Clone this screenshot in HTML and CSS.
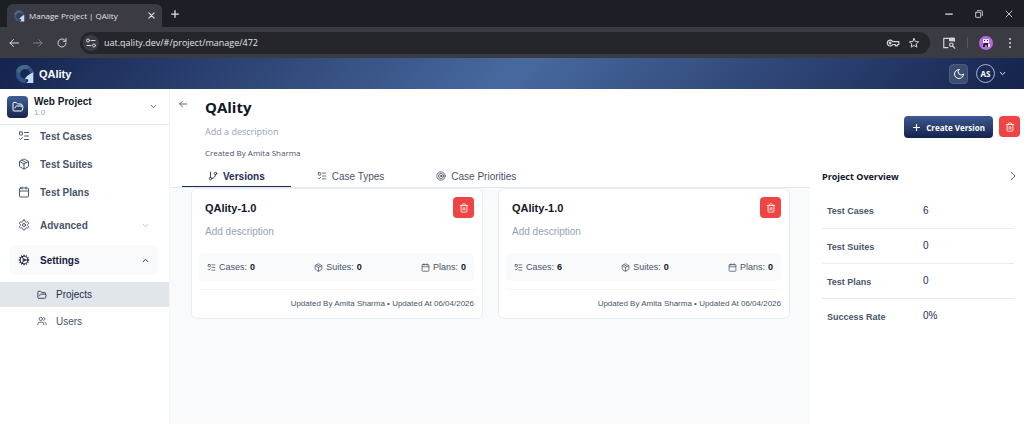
FILE: index.html
```html
<!DOCTYPE html>
<html lang="en">
<head>
  <meta charset="UTF-8" />
  <meta name="viewport" content="width=device-width, initial-scale=1.0" />
  <title>Manage Project | QAlity</title>
  <link rel="stylesheet" href="styles.css">
</head>
<body>

  <!-- Icon set -->
  <svg class="sprite" aria-hidden="true">
    <symbol id="logo" viewBox="0 0 20 20">
      <path d="M10 1a9 9 0 1 0 1 18l1-4.500a5 5 0 1 1 3.500-5l3.500-1.500A9 9 0 0 0 10 1z" fill="#2f5588" stroke="none" />
      <path d="M1.500 7a9 9 0 0 1 13.500-4.500l-2.500 3A5 5 0 0 0 5.500 9z" fill="#46688f" stroke="none" />
      <path d="M18.800 8v11H11.500c2-1 2.500-2 2.200-3.500-1-.500-2.200-.700-3.200-.300 1.200-3.700 4.500-4.200 8.300-7.200z" fill="#c5dcf8" stroke="none" />
    </symbol>
    <symbol id="list" viewBox="0 0 24 24">
      <rect x="3" y="4" width="6" height="6" rx="1" /><path d="m3 17 2 2 4-4M13 5h8M13 12h8M13 19h8" />
    </symbol>
    <symbol id="package" viewBox="0 0 24 24">
      <path d="M11 21.700a2 2 0 0 0 2 0l7-4A2 2 0 0 0 21 16V8a2 2 0 0 0-1-1.700l-7-4a2 2 0 0 0-2 0l-7 4A2 2 0 0 0 3 8v8a2 2 0 0 0 1 1.700z" /><path d="M12 22V12M3.300 7 12 12l8.700-5M7.500 4.300l9 5.100" />
    </symbol>
    <symbol id="calendar" viewBox="0 0 24 24">
      <rect x="3" y="4" width="18" height="18" rx="2" /><path d="M8 2v4M16 2v4M3 10h18" />
    </symbol>
    <symbol id="settings" viewBox="0 0 24 24">
      <path d="M12.220 2h-.44a2 2 0 0 0-2 2v.18a2 2 0 0 1-1 1.730l-.43.25a2 2 0 0 1-2 0l-.15-.08a2 2 0 0 0-2.730.73l-.22.38a2 2 0 0 0 .73 2.730l.15.1a2 2 0 0 1 1 1.720v.51a2 2 0 0 1-1 1.740l-.15.09a2 2 0 0 0-.73 2.730l.22.38a2 2 0 0 0 2.730.73l.15-.08a2 2 0 0 1 2 0l.43.25a2 2 0 0 1 1 1.730V20a2 2 0 0 0 2 2h.44a2 2 0 0 0 2-2v-.18a2 2 0 0 1 1-1.730l.43-.25a2 2 0 0 1 2 0l.15.08a2 2 0 0 0 2.730-.73l.22-.39a2 2 0 0 0-.73-2.730l-.15-.08a2 2 0 0 1-1-1.740v-.5a2 2 0 0 1 1-1.740l.15-.09a2 2 0 0 0 .73-2.730l-.22-.38a2 2 0 0 0-2.730-.73l-.15.08a2 2 0 0 1-2 0l-.43-.25a2 2 0 0 1-1-1.730V4a2 2 0 0 0-2-2z" /><circle cx="12" cy="12" r="3" />
    </symbol>
    <symbol id="cog" viewBox="0 0 24 24">
      <circle cx="12" cy="12" r="8" /><circle cx="12" cy="12" r="2" /><path d="M12 2v2M12 22v-2M17 20.660l-1-1.730M11 10.270 7 3.340M20.660 17l-1.730-1M3.340 7l1.730 1M14 12h8M2 12h2M20.660 7l-1.730 1M3.340 17l1.730-1M17 3.340l-1 1.730M11 13.730l-4 6.930" />
    </symbol>
    <symbol id="folder" viewBox="0 0 24 24">
      <path d="m6 14 1.500-2.900A2 2 0 0 1 9.240 10H20a2 2 0 0 1 1.940 2.500l-1.540 6a2 2 0 0 1-1.950 1.500H4a2 2 0 0 1-2-2V5a2 2 0 0 1 2-2h3.900a2 2 0 0 1 1.690.9l.81 1.200a2 2 0 0 0 1.670.9H18a2 2 0 0 1 2 2v2" />
    </symbol>
    <symbol id="users" viewBox="0 0 24 24">
      <path d="M16 21v-2a4 4 0 0 0-4-4H6a4 4 0 0 0-4 4v2M22 21v-2a4 4 0 0 0-3-3.870M16 3.130a4 4 0 0 1 0 7.750" /><circle cx="9" cy="7" r="4" />
    </symbol>
    <symbol id="branch" viewBox="0 0 24 24">
      <path d="M6 3v12" /><circle cx="18" cy="6" r="3" /><circle cx="6" cy="18" r="3" /><path d="M18 9a9 9 0 0 1-9 9" />
    </symbol>
    <symbol id="target" viewBox="0 0 24 24">
      <circle cx="12" cy="12" r="10" /><circle cx="12" cy="12" r="6" /><circle cx="12" cy="12" r="2" />
    </symbol>
    <symbol id="trash" viewBox="0 0 24 24">
      <path d="M3 6h18M19 6v14a2 2 0 0 1-2 2H7a2 2 0 0 1-2-2V6M8 6V4a2 2 0 0 1 2-2h4a2 2 0 0 1 2 2v2M10 11v6M14 11v6" />
    </symbol>
    <symbol id="down" viewBox="0 0 24 24"><path d="m4 8 8 8 8-8" /></symbol>
    <symbol id="up" viewBox="0 0 24 24"><path d="m20 16-8-8-8 8" /></symbol>
    <symbol id="right" viewBox="0 0 24 24"><path d="m8 3 9 9-9 9" /></symbol>
    <symbol id="arrow-left" viewBox="0 0 24 24"><path d="m11 5-7 7 7 7M4 12h17" /></symbol>
    <symbol id="arrow-right" viewBox="0 0 24 24"><path d="m13 5 7 7-7 7M20 12H3" /></symbol>
    <symbol id="reload" viewBox="0 0 24 24"><path d="M20 12a8 8 0 1 1-2.500-5.800L20 8.500M20 3v5.500h-5.500" /></symbol>
    <symbol id="tune" viewBox="0 0 24 24"><circle cx="6" cy="7" r="3" /><path d="M12 7h8M4 17h8" /><circle cx="18" cy="17" r="3" /></symbol>
    <symbol id="key" viewBox="0 0 24 24"><path d="M11.500 9.500H22v5h-2.500V17H16v-2.500h-4.500a5 5 0 1 1 0-5z" /><circle cx="7" cy="12" r="1.500" /></symbol>
    <symbol id="star" viewBox="0 0 24 24"><path d="m12 3 2.700 6 6.500.6-4.900 4.300 1.500 6.400L12 16.900l-5.800 3.400 1.500-6.400-4.900-4.300 6.500-.6z" /></symbol>
    <symbol id="search-page" viewBox="0 0 24 24"><path d="M10 20H3V4h18v5" /><path d="M13 4h8v4h-8z" fill="currentColor" /><circle cx="16" cy="15" r="3" /><path d="m18 17 4 4" /></symbol>
    <symbol id="moon" viewBox="0 0 24 24"><path d="M12 3a6 6 0 0 0 9 9 9 9 0 1 1-9-9z" /></symbol>
    <symbol id="plus" viewBox="0 0 24 24"><path d="M12 4v16M4 12h16" /></symbol>
    <symbol id="close" viewBox="0 0 24 24"><path d="m5 5 14 14M19 5 5 19" /></symbol>
    <symbol id="minus" viewBox="0 0 24 24"><path d="M4 12h16" /></symbol>
    <symbol id="restore" viewBox="0 0 24 24"><rect x="4" y="8" width="12" height="12" rx="1" /><path d="M8 4h10a2 2 0 0 1 2 2v10" /></symbol>
    <symbol id="dots" viewBox="0 0 24 24"><path d="M12 4v.1M12 12v.1M12 20v.1" stroke-width="4" /></symbol>
  </svg>

  <!-- Browser window -->
  <div class="tab-strip">
    <div class="browser-tab">
      <svg class="icon"><use href="#logo" /></svg>
      <span class="tab-title">Manage Project | QAlity</span>
      <button type="button" class="plain" aria-label="Close tab"><svg class="icon tiny bold"><use href="#close" /></svg></button>
    </div>
    <button type="button" class="plain new-tab" aria-label="New tab"><svg class="icon small bold"><use href="#plus" /></svg></button>
    <div class="window-buttons">
      <button type="button" class="plain" aria-label="Minimize"><svg class="icon small bold"><use href="#minus" /></svg></button>
      <button type="button" class="plain" aria-label="Restore"><svg class="icon small"><use href="#restore" /></svg></button>
      <button type="button" class="plain" aria-label="Close window"><svg class="icon small"><use href="#close" /></svg></button>
    </div>
  </div>

  <div class="toolbar">
    <button type="button" class="plain" aria-label="Back"><svg class="icon"><use href="#arrow-left" /></svg></button>
    <button type="button" class="plain dim" aria-label="Forward"><svg class="icon"><use href="#arrow-right" /></svg></button>
    <button type="button" class="plain" aria-label="Reload"><svg class="icon"><use href="#reload" /></svg></button>
    <div class="address">
      <button type="button" class="plain site-info" aria-label="Site information"><svg class="icon"><use href="#tune" /></svg></button>
      <input type="text" class="url" aria-label="Address" value="uat.qality.dev/#/project/manage/472" />
      <button type="button" class="plain" aria-label="Passwords"><svg class="icon wide"><use href="#key" /></svg></button>
      <button type="button" class="plain" aria-label="Bookmark"><svg class="icon"><use href="#star" /></svg></button>
    </div>
    <div class="toolbar-end">
      <button type="button" class="plain" aria-label="Search tabs"><svg class="icon wide"><use href="#search-page" /></svg></button>
      <span class="divider"></span>
      <button type="button" class="plain" aria-label="Profile">
        <svg class="profile" viewBox="0 0 14 14">
          <circle cx="7" cy="7" r="7" fill="#b46be0" />
          <path d="M4 3h6v4H4z" fill="#ece5f2" /><path d="M5 4h1v1H5zM8 4h1v1H8zM5 7h4v4H8V9H6v2H4V9z" fill="#251c35" /><path d="M9 8h2v3H9z" fill="#eee" />
        </svg>
      </button>
      <button type="button" class="plain" aria-label="Menu"><svg class="icon"><use href="#dots" /></svg></button>
    </div>
  </div>

  <!-- App header -->
  <header class="app-header">
    <a href="#" class="brand"><svg class="brand-logo"><use href="#logo" /></svg>QAlity</a>
    <div class="account">
      <button type="button" class="theme" aria-label="Dark mode"><svg class="icon"><use href="#moon" /></svg></button>
      <button type="button" class="plain user"><span class="avatar">AS</span><svg class="icon mini bold"><use href="#down" /></svg></button>
    </div>
  </header>

  <div class="layout">
    <aside class="sidebar">
      <button type="button" class="project-picker">
        <span class="project-icon"><svg class="icon"><use href="#folder" /></svg></span>
        <span class="project-name">Web Project<small>1.0</small></span>
        <svg class="icon mini bold"><use href="#down" /></svg>
      </button>
      <nav class="menu">
        <a href="#"><svg class="icon"><use href="#list" /></svg>Test Cases</a>
        <a href="#"><svg class="icon"><use href="#package" /></svg>Test Suites</a>
        <a href="#"><svg class="icon"><use href="#calendar" /></svg>Test Plans</a>
        <button type="button" class="group"><svg class="icon"><use href="#settings" /></svg>Advanced<svg class="icon mini end faded"><use href="#down" /></svg></button>
        <button type="button" class="group open"><svg class="icon"><use href="#cog" /></svg>Settings<svg class="icon mini end bold"><use href="#up" /></svg></button>
        <a href="#" class="sub active"><svg class="icon small"><use href="#folder" /></svg>Projects</a>
        <a href="#" class="sub"><svg class="icon small"><use href="#users" /></svg>Users</a>
      </nav>
    </aside>

    <main class="content">
      <section class="project-head">
        <button type="button" class="plain back" aria-label="Go back"><svg class="icon small"><use href="#arrow-left" /></svg></button>
        <div class="project-info">
          <h1>QAlity</h1>
          <p class="description">Add a description</p>
          <p class="created">Created By Amita Sharma</p>
        </div>
        <div class="actions">
          <button type="button" class="create"><svg class="icon tiny bold"><use href="#plus" /></svg>Create Version</button>
          <button type="button" class="delete" aria-label="Delete project"><svg class="icon small"><use href="#trash" /></svg></button>
        </div>
      </section>

      <div class="columns">
        <section class="versions">
          <nav class="tabs">
            <a href="#" class="current"><svg class="icon small"><use href="#branch" /></svg>Versions</a>
            <a href="#"><svg class="icon small"><use href="#list" /></svg>Case Types</a>
            <a href="#"><svg class="icon small"><use href="#target" /></svg>Case Priorities</a>
          </nav>
          <div class="cards">
            <article class="card">
              <div class="card-head">
                <h2>QAlity-1.0</h2>
                <button type="button" class="delete" aria-label="Delete version"><svg class="icon small"><use href="#trash" /></svg></button>
              </div>
              <p class="card-text">Add description</p>
              <div class="stats">
                <span><svg class="icon tiny"><use href="#list" /></svg>Cases: <b>0</b></span>
                <span><svg class="icon tiny"><use href="#package" /></svg>Suites: <b>0</b></span>
                <span><svg class="icon tiny"><use href="#calendar" /></svg>Plans: <b>0</b></span>
              </div>
              <p class="updated">Updated By Amita Sharma • Updated At 06/04/2026</p>
            </article>
            <article class="card">
              <div class="card-head">
                <h2>QAlity-1.0</h2>
                <button type="button" class="delete" aria-label="Delete version"><svg class="icon small"><use href="#trash" /></svg></button>
              </div>
              <p class="card-text">Add description</p>
              <div class="stats">
                <span><svg class="icon tiny"><use href="#list" /></svg>Cases: <b>6</b></span>
                <span><svg class="icon tiny"><use href="#package" /></svg>Suites: <b>0</b></span>
                <span><svg class="icon tiny"><use href="#calendar" /></svg>Plans: <b>0</b></span>
              </div>
              <p class="updated">Updated By Amita Sharma • Updated At 06/04/2026</p>
            </article>
          </div>
        </section>

        <aside class="overview">
          <div class="overview-head">
            <h2>Project Overview</h2>
            <button type="button" class="plain" aria-label="Collapse overview"><svg class="icon small"><use href="#right" /></svg></button>
          </div>
          <table>
            <tr><th scope="row">Test Cases</th><td>6</td></tr>
            <tr><th scope="row">Test Suites</th><td>0</td></tr>
            <tr><th scope="row">Test Plans</th><td>0</td></tr>
            <tr><th scope="row">Success Rate</th><td>0%</td></tr>
          </table>
        </aside>
      </div>
    </main>
  </div>

</body>
</html>
```

FILE: styles.css
```css
* {
  box-sizing: border-box;
}

body {
  margin: 0;
  min-height: 100vh;
  display: flex;
  flex-direction: column;
  font-family: "Liberation Sans", Arial, sans-serif;
  font-size: 10px;
  color: #475569;
  background: #f8fafc;
}

h1, h2, p {
  margin: 0;
}

a {
  color: inherit;
  text-decoration: none;
}

button {
  font: inherit;
  color: inherit;
  border: none;
  padding: 0;
  cursor: pointer;
  display: flex;
  align-items: center;
}

.sprite {
  display: none;
}

.icon {
  width: 12px;
  height: 12px;
  flex: none;
  fill: none;
  stroke: currentColor;
  stroke-width: 2;
  stroke-linecap: round;
  stroke-linejoin: round;
}

.icon.small {
  width: 10px;
  height: 10px;
}

.icon.tiny {
  width: 9px;
  height: 9px;
}

.icon.mini {
  width: 7px;
  height: 7px;
}

.icon.wide {
  width: 14px;
  height: 14px;
}

.icon.bold {
  stroke-width: 3;
}

.plain {
  background: none;
}

/* Browser window */
.tab-strip {
  display: flex;
  align-items: center;
  height: 27px;
  padding-left: 7px;
  background: #1c2026;
  color: #e3e3e6;
  font-family: "Open Sans", sans-serif;
}

.browser-tab {
  display: flex;
  align-items: center;
  align-self: flex-end;
  gap: 4px;
  width: 155px;
  height: 23px;
  padding: 0 6px;
  font-size: 8px;
  background: #3b3c43;
  border-radius: 6px 6px 0 0;
}

.tab-title {
  flex: 1;
}

.new-tab {
  margin-left: 8px;
}

.window-buttons {
  display: flex;
  gap: 20px;
  margin-left: auto;
  padding-right: 10px;
}

.toolbar {
  display: flex;
  align-items: center;
  gap: 12px;
  height: 31px;
  padding: 0 8px;
  background: #3b3c43;
  color: #d5d6da;
}

.dim {
  color: #7d7e84;
}

.address {
  flex: 1;
  display: flex;
  align-items: center;
  gap: 8px;
  height: 22px;
  padding: 0 10px 0 3px;
  background: #24262c;
  border-radius: 11px;
}

.site-info {
  justify-content: center;
  width: 16px;
  height: 16px;
  margin-right: -3px;
  background: #3b3c43;
  border-radius: 50%;
}

.url {
  flex: 1;
  min-width: 0;
  padding: 0;
  font-family: "Open Sans", sans-serif;
  font-size: 9px;
  color: #e3e3e6;
  background: none;
  border: none;
}

.toolbar-end {
  display: flex;
  align-items: center;
  gap: 11px;
}

.divider {
  width: 1px;
  height: 11px;
  background: #56575e;
}

.profile {
  width: 14px;
  height: 14px;
}

/* App header */
.app-header {
  display: flex;
  align-items: center;
  justify-content: space-between;
  height: 31px;
  padding: 0 18px 0 14px;
  color: #fff;
  background: linear-gradient(135deg, #15234d, #48699f 50%, #15234d);
}

.brand {
  display: flex;
  align-items: center;
  gap: 4px;
  font-size: 11px;
  font-weight: bold;
}

.brand-logo {
  width: 21px;
  height: 20px;
}

.account {
  display: flex;
  align-items: center;
  gap: 8px;
}

.theme {
  justify-content: center;
  width: 19px;
  height: 20px;
  color: #fff;
  background: #3d4d71;
  border: 1px solid #4c5d80;
  border-radius: 4px;
}

.user {
  gap: 4px;
}

.avatar {
  display: flex;
  align-items: center;
  justify-content: center;
  width: 19px;
  height: 19px;
  font-family: "Noto Sans", sans-serif;
  font-size: 8px;
  font-weight: bold;
  border: 1px solid #a9b5cf;
  border-radius: 50%;
}

.layout {
  flex: 1;
  display: flex;
}

/* Sidebar */
.sidebar {
  flex: none;
  width: 170px;
  background: #fff;
  border-right: 1px solid #f1f5f9;
}

.project-picker {
  gap: 6px;
  width: 100%;
  height: 36px;
  padding: 0 12px 0 7px;
  text-align: left;
  background: #fff;
  border-bottom: 1px solid #e2e8f0;
}

.project-icon {
  display: flex;
  align-items: center;
  justify-content: center;
  width: 21px;
  height: 22px;
  color: #fff;
  background: linear-gradient(#3f5f96, #16244d);
  border-radius: 4px;
}

.project-name {
  flex: 1;
  font-weight: bold;
  line-height: 12px;
  color: #0f172a;
}

.project-name small {
  display: block;
  font-size: 8px;
  font-weight: normal;
  line-height: 10px;
  color: #94a3b8;
}

.menu a,
.menu .group {
  display: flex;
  align-items: center;
  gap: 10px;
  height: 28px;
  padding: 0 18px;
  font-weight: bold;
}

.menu a:first-child {
  height: 25px;
  padding-bottom: 3px;
}

.menu .group {
  width: calc(100% - 20px);
  height: 30px;
  margin: 4px 10px 0 9px;
  padding: 0 9px;
  background: none;
  border-radius: 5px;
}

.menu .open {
  margin-top: 5px;
  margin-bottom: 7px;
  color: #14213d;
  background: #f8fafc;
}

.end {
  margin-left: auto;
}

.faded {
  color: #94a3b8;
}

.menu .sub {
  height: 28px;
  gap: 9px;
  padding-left: 37px;
  font-weight: normal;
}

.menu .active {
  height: 25px;
  color: #1e2b4f;
  background: #e1e6eb;
}

/* Project header */
.content {
  flex: 1;
  min-width: 0;
  display: flex;
  flex-direction: column;
}

.project-head {
  display: flex;
  align-items: center;
  height: 76px;
  padding: 0 4px 0 8px;
  background: #fff;
  font-family: "Open Sans", sans-serif;
}

.back {
  align-self: flex-start;
  margin-top: 10px;
}

.project-info {
  flex: 1;
  padding: 2px 0 0 17px;
}

h1 {
  font-size: 15px;
  line-height: 20px;
  color: #0f172a;
}

.description {
  margin: 8px 0;
  font-size: 9px;
  line-height: 14px;
  color: #94a3b8;
}

.created {
  font-size: 8px;
  line-height: 12px;
}

.actions {
  display: flex;
  gap: 6px;
}

.create {
  gap: 5px;
  height: 22px;
  padding: 0 8px;
  font-size: 8px;
  font-weight: bold;
  color: #fff;
  background: linear-gradient(#3c5a92, #15224b);
  border-radius: 4px;
}

.delete {
  justify-content: center;
  width: 21px;
  height: 21px;
  color: #fff;
  background: #ef4444;
  border-radius: 4px;
}

.columns {
  flex: 1;
  display: flex;
}

/* Versions */
.versions {
  flex: 1;
}

.tabs {
  display: flex;
  height: 23px;
  padding-left: 12px;
  background: #fff;
  border-bottom: 1px solid #e2e8f0;
}

.tabs a {
  display: flex;
  align-items: center;
  gap: 5px;
  padding: 0 26px;
}

.tabs .current {
  font-weight: bold;
  color: #1e2b55;
  box-shadow: inset 0 -1px #1e2b55;
}

.cards {
  display: grid;
  grid-template-columns: repeat(2, 1fr);
  gap: 15px;
  padding: 0 20px 0 21px;
}

.card {
  padding: 8px 8px 8px 7px;
  background: #fff;
  border: 1px solid #e8edf3;
  border-radius: 6px;
}

.card-head {
  display: flex;
  align-items: center;
  justify-content: space-between;
  padding-left: 6px;
}

.card h2 {
  font-size: 11px;
  color: #0f172a;
}

.card-text {
  padding: 8px 6px 15px;
  line-height: 12px;
  color: #94a3b8;
}

.stats {
  display: flex;
  justify-content: space-between;
  padding: 0 8px;
  font-size: 9px;
  line-height: 28px;
  background: #f8fafc;
  border-radius: 4px;
}

.stats span {
  display: flex;
  align-items: center;
  gap: 3px;
}

.stats b {
  color: #0f172a;
}

.updated {
  margin-top: 8px;
  padding-top: 8px;
  font-size: 8px;
  line-height: 12px;
  text-align: right;
  border-top: 1px solid #f1f5f9;
}

/* Overview */
.overview {
  flex: none;
  width: 214px;
  padding: 0 6px 0 12px;
  background: #fff;
}

.overview-head {
  display: flex;
  align-items: center;
  justify-content: space-between;
  height: 22px;
  color: #334155;
}

.overview h2 {
  font-family: "Open Sans", sans-serif;
  font-size: 9px;
  font-weight: bold;
  color: #0f172a;
}

.overview table {
  width: calc(100% - 4px);
  margin-top: 6px;
  border-collapse: collapse;
}

.overview tr {
  height: 35px;
  border-bottom: 1px solid #e8ebef;
}

.overview tr:last-child {
  border-bottom: none;
}

.overview th {
  width: 50%;
  padding: 2px 5px 0;
  font-size: 9px;
  text-align: left;
}

.overview td {
  padding: 0 5px;
  font-size: 10px;
  color: #1e2b55;
}
```
